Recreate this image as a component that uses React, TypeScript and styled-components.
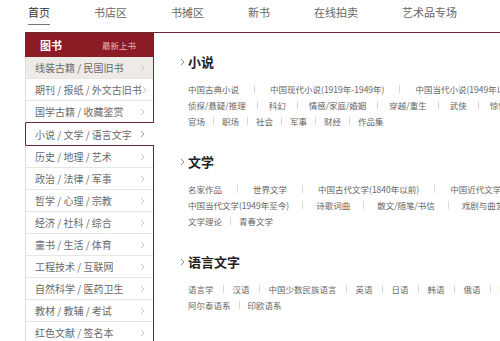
import React from 'react';
import styled, { createGlobalStyle } from 'styled-components';

//
//
//

const NAV = ['首页', '书店区', '书摊区', '新书', '在线拍卖', '艺术品专场'];

const TOP_ROWS = ['线装古籍 / 民国旧书', '期刊 / 报纸 / 外文古旧书', '国学古籍 / 收藏鉴赏'];
const ACTIVE_ROW = '小说 / 文学 / 语言文字';
const BOTTOM_ROWS = [
  '历史 / 地理 / 艺术',
  '政治 / 法律 / 军事',
  '哲学 / 心理 / 宗教',
  '经济 / 社科 / 综合',
  '童书 / 生活 / 体育',
  '工程技术 / 互联网',
  '自然科学 / 医药卫生',
  '教材 / 教辅 / 考试',
  '红色文献 / 签名本',
];

type Line = { gap: number; items: string[] };
type Section = { title: string; lines: Line[] };

const SECTIONS: Section[] = [
  {
    title: '小说',
    lines: [
      { gap: 15, items: ['中国古典小说', '中国现代小说(1919年-1949年)', '中国当代小说(1949年以后)'] },
      { gap: 11, items: ['侦探/悬疑/推理', '科幻', '情感/家庭/婚姻', '穿越/重生', '武侠', '惊悚/恐怖'] },
      { gap: 8, items: ['官场', '职场', '社会', '军事', '财经', '作品集'] },
    ],
  },
  {
    title: '文学',
    lines: [
      { gap: 15, items: ['名家作品', '世界文学', '中国古代文学(1840年以前)', '中国近代文学(1840-1919)'] },
      { gap: 13, items: ['中国当代文学(1949年至今)', '诗歌词曲', '散文/随笔/书信', '戏剧与曲艺'] },
      { gap: 8, items: ['文学理论', '青春文学'] },
    ],
  },
  {
    title: '语言文字',
    lines: [
      { gap: 9, items: ['语言学', '汉语', '中国少数民族语言', '英语', '日语', '韩语', '俄语', '德语', '法语'] },
      { gap: 8, items: ['阿尔泰语系', '印欧语系'] },
    ],
  },
];

//
//
//

const Chevron = ({ color }: { color: string }) => (
  <svg width="5" height="8" viewBox="0 0 5 8">
    <path d="M1 1 L4 4 L1 7" fill="none" stroke={color} strokeWidth="1" />
  </svg>
);

const App = () => {
  /**
   *
   */
  const renderNav = () => {
    return (
      <Nav>
        {NAV.map((label, i) => (
          <NavItem key={label} active={i === 0}>
            {label}
          </NavItem>
        ))}
      </Nav>
    );
  };

  /**
   *
   */
  const renderSidebar = () => {
    return (
      <Sidebar>
        <TopGroup>
          <Header>
            <b>图书</b>
            <span>最新上书</span>
          </Header>
          {TOP_ROWS.map((label, i) => (
            <Row key={label} shaded={i === 0}>
              <span>{label}</span>
              <Chevron color="#c9c9c9" />
            </Row>
          ))}
        </TopGroup>
        <ActiveRow>
          <span>{ACTIVE_ROW}</span>
          <Chevron color="#9a9a9a" />
        </ActiveRow>
        <BottomGroup>
          {BOTTOM_ROWS.map((label) => (
            <Row key={label}>
              <span>{label}</span>
              <Chevron color="#c9c9c9" />
            </Row>
          ))}
        </BottomGroup>
      </Sidebar>
    );
  };

  /**
   *
   */
  const renderContent = () => {
    return (
      <Content>
        {SECTIONS.map((section) => (
          <SectionBox key={section.title}>
            <Title>
              <Chevron color="#888" />
              <h3>{section.title}</h3>
            </Title>
            {section.lines.map((line, li) => (
              <LinkLine key={li} gap={line.gap}>
                {line.items.map((item, i) => (
                  <React.Fragment key={item}>
                    {i > 0 && <Sep />}
                    <a>{item}</a>
                  </React.Fragment>
                ))}
              </LinkLine>
            ))}
          </SectionBox>
        ))}
      </Content>
    );
  };

  return (
    <>
      <GlobalStyle />
      <Page>
        {renderNav()}
        <Main>
          {renderSidebar()}
          {renderContent()}
        </Main>
      </Page>
    </>
  );
};

//
//
//

const MAROON = '#6f2530';

const GlobalStyle = createGlobalStyle`
  html, body {
    margin: 0;
    padding: 0;
    background: #fff;
    overflow: hidden;
  }
  body {
    font-family: "Noto Sans CJK SC", "Microsoft YaHei", sans-serif;
    color: #666;
  }
`;

const Page = styled.div`
  width: 475px;
  height: 341px;
  margin-left: 25px;
  overflow: hidden;
`;

const Nav = styled.nav`
  display: flex;
  gap: 44px;
  height: 32px;
  padding-left: 3px;
`;

const NavItem = styled.div<{ active?: boolean }>`
  height: 24px;
  line-height: 24px;
  font-size: 11px;
  color: ${(p) => (p.active ? '#333' : '#666')};
  border-bottom: 1px solid ${(p) => (p.active ? '#777' : 'transparent')};
`;

const Main = styled.div`
  display: flex;
  border-top: 1px solid ${MAROON};
  width: 600px;
`;

const Sidebar = styled.aside`
  display: flex;
  flex-direction: column;
  width: 129px;
  flex-shrink: 0;
`;

const TopGroup = styled.div`
  border-left: 1px solid #ddd;
  border-right: 1px solid ${MAROON};
  border-bottom: 1px solid ${MAROON};
`;

const BottomGroup = styled.div`
  border-left: 1px solid #ddd;
  border-right: 1px solid ${MAROON};
  border-top: 1px solid ${MAROON};
  height: 400px;
`;

const Header = styled.div`
  display: flex;
  align-items: center;
  justify-content: space-between;
  height: 24px;
  margin-left: -1px;
  padding: 0 17px 0 15px;
  background: #8b1b25;
  b {
    font-size: 11px;
    color: #fff;
    font-weight: 700;
  }
  span {
    font-size: 8.5px;
    color: #e6b6ba;
  }
`;

const Row = styled.div<{ shaded?: boolean }>`
  display: flex;
  align-items: center;
  justify-content: space-between;
  height: 21px;
  padding: 0 8px 0 9px;
  font-size: 10px;
  color: #6a6a6a;
  white-space: nowrap;
  background: ${(p) => (p.shaded ? '#edeae7' : '#fff')};
  &:not(:last-child) {
    border-bottom: 1px solid #e6e6e6;
  }
  svg {
    flex-shrink: 0;
  }
`;

const ActiveRow = styled.div`
  display: flex;
  align-items: center;
  justify-content: space-between;
  height: 22px;
  padding: 0 9px 0 9px;
  font-size: 10px;
  color: #6a6a6a;
  white-space: nowrap;
  border-left: 1px solid ${MAROON};
  background: #fff;
`;

const Content = styled.div`
  flex: 1;
  padding: 19px 0 0 23px;
`;

const SectionBox = styled.section`
  margin-bottom: 23px;
`;

const Title = styled.div`
  display: flex;
  align-items: center;
  height: 20px;
  margin-bottom: 9px;
  svg {
    width: 11px;
    flex-shrink: 0;
  }
  h3 {
    margin: 0;
    font-size: 13px;
    font-weight: 700;
    color: #222;
    line-height: 20px;
  }
`;

const LinkLine = styled.div<{ gap: number }>`
  display: flex;
  align-items: center;
  gap: ${(p) => p.gap}px;
  height: 16px;
  padding-left: 11px;
  white-space: nowrap;
  font-size: 8.5px;
  a {
    color: #666;
  }
`;

const Sep = styled.span`
  width: 1px;
  height: 8px;
  background: #d8d8d8;
  flex-shrink: 0;
`;

export default App;
